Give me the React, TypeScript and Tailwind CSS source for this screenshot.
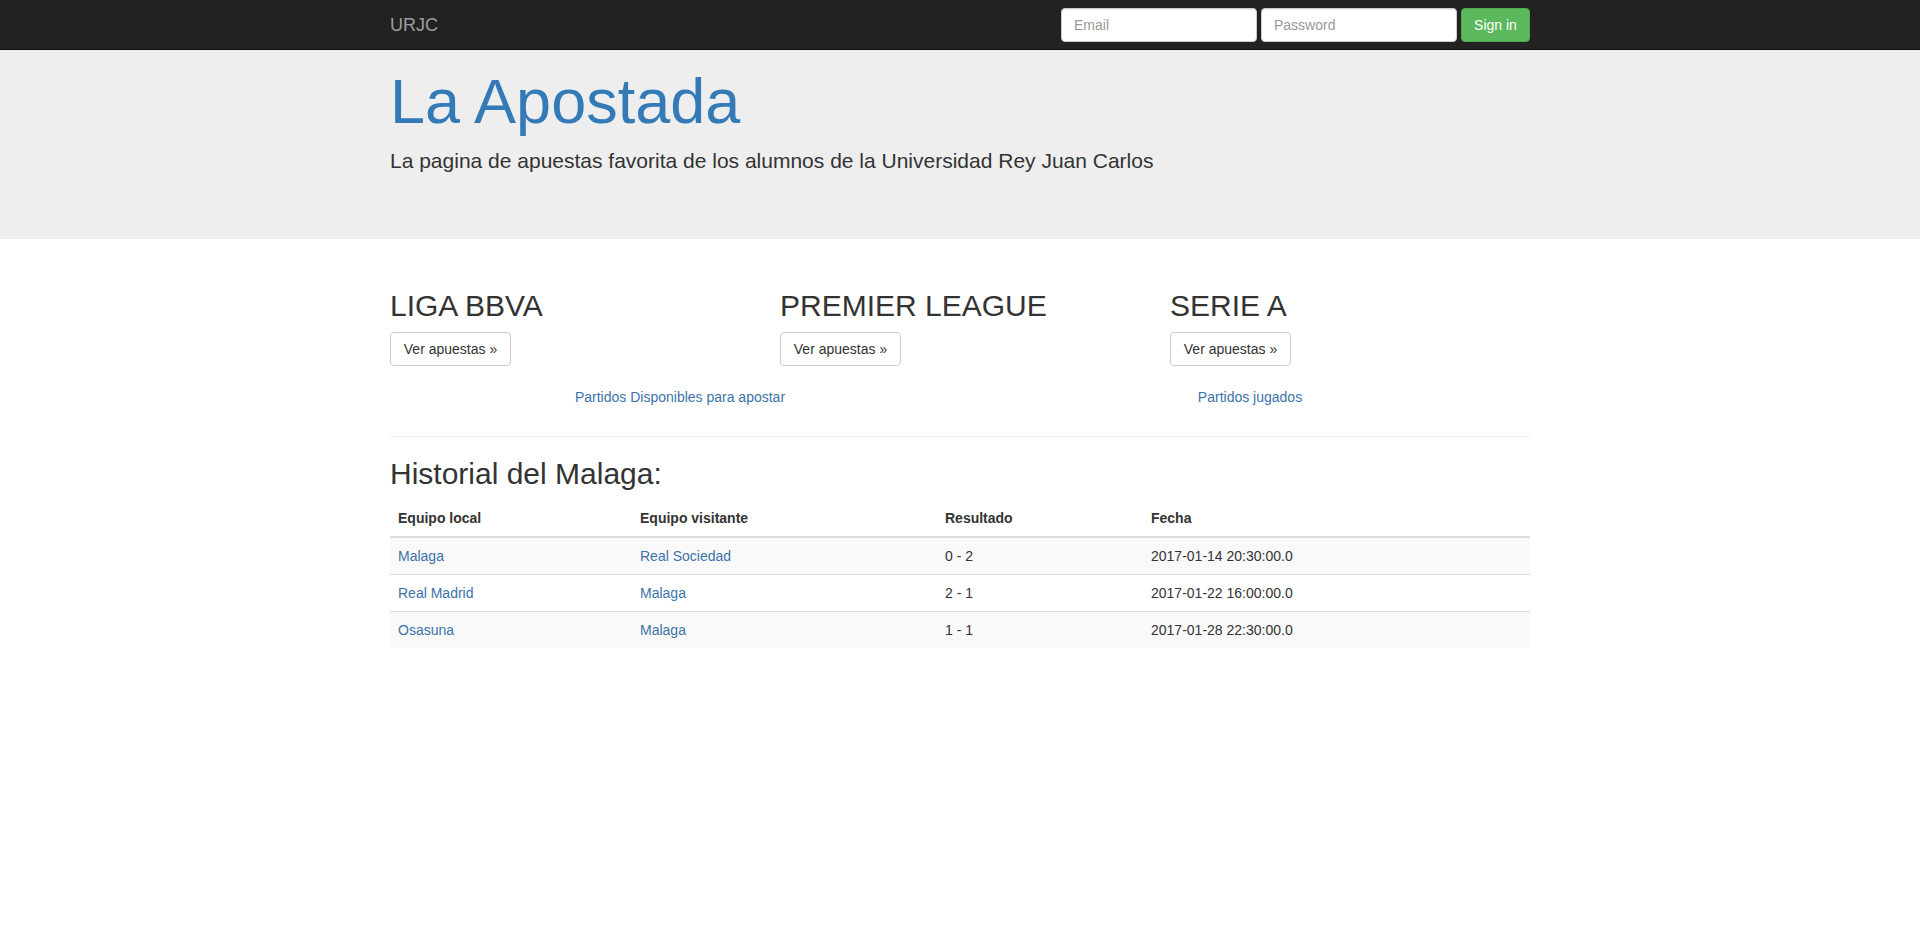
import React from "react";

const rows = [
  { local: "Malaga", visitante: "Real Sociedad", resultado: "0 - 2", fecha: "2017-01-14 20:30:00.0" },
  { local: "Real Madrid", visitante: "Malaga", resultado: "2 - 1", fecha: "2017-01-22 16:00:00.0" },
  { local: "Osasuna", visitante: "Malaga", resultado: "1 - 1", fecha: "2017-01-28 22:30:00.0" },
];

const leagues = ["LIGA BBVA", "PREMIER LEAGUE", "SERIE A"];

export default function App() {
  return (
    <div
      className="min-h-[949px] bg-white text-[14px] leading-[20px] text-[#333]"
      style={{ fontFamily: '"Liberation Sans", Arial, Helvetica, sans-serif' }}
    >
      {/* Navbar */}
      <nav className="h-[50px] border-b border-[#080808] bg-[#222]">
        <div className="mx-auto flex h-[49px] w-[1170px] items-center justify-between px-[15px]">
          <a className="text-[18px] leading-[20px] text-[#9d9d9d]" href="#">
            URJC
          </a>
          <form className="flex items-center gap-[4px]" onSubmit={(e) => e.preventDefault()}>
            <input
              type="text"
              placeholder="Email"
              className="h-[34px] w-[196px] rounded-[4px] border border-[#ccc] bg-white px-[12px] py-[6px] text-[14px] text-[#555] shadow-[inset_0_1px_1px_rgba(0,0,0,0.075)] outline-none placeholder:text-[#999]"
            />
            <input
              type="password"
              placeholder="Password"
              className="h-[34px] w-[196px] rounded-[4px] border border-[#ccc] bg-white px-[12px] py-[6px] text-[14px] text-[#555] shadow-[inset_0_1px_1px_rgba(0,0,0,0.075)] outline-none placeholder:text-[#999]"
            />
            <button
              type="submit"
              className="h-[34px] w-[69px] rounded-[4px] border border-[#4cae4c] bg-[#5cb85c] text-[14px] text-white"
            >
              Sign in
            </button>
          </form>
        </div>
      </nav>

      {/* Jumbotron */}
      <div className="mb-[30px] bg-[#eee] pb-[48px] pt-[17px]">
        <div className="mx-auto w-[1170px] px-[15px]">
          <h1 className="mb-[10px] text-[63px] leading-[1.1] font-medium text-[#337ab7]">La Apostada</h1>
          <p className="mb-[15px] text-[21px] leading-[30px] font-extralight text-[#333]">
            La pagina de apuestas favorita de los alumnos de la Universidad Rey Juan Carlos
          </p>
        </div>
      </div>

      <div className="mx-auto w-[1170px] px-[15px]">
        <div className="grid grid-cols-3 gap-[30px]">
          {leagues.map((l) => (
            <div key={l}>
              <h2 className="mb-[10px] mt-[20px] text-[30px] leading-[33px] font-medium text-[#333]">{l}</h2>
              <p className="mb-[10px]">
                <a
                  href="#"
                  className="inline-block h-[34px] w-[121px] rounded-[4px] border border-[#ccc] bg-white py-[6px] text-center text-[14px] leading-[20px] text-[#333]"
                >
                  Ver apuestas »
                </a>
              </p>
            </div>
          ))}
        </div>

        <div className="mt-[11px] grid grid-cols-2">
          <div className="pl-[10px] text-center">
            <a href="#" className="text-[#3d73ab]">
              Partidos Disponibles para apostar
            </a>
          </div>
          <div className="pl-[10px] text-center">
            <a href="#" className="text-[#3d73ab]">
              Partidos jugados
            </a>
          </div>
        </div>

        <hr className="mb-[20px] mt-[29px] border-t border-[#eee]" />

        <h2 className="mb-[10px] text-[30px] leading-[33px] font-medium text-[#333]">Historial del Malaga:</h2>

        <table className="w-full border-collapse">
          <colgroup>
            <col className="w-[242px]" />
            <col className="w-[305px]" />
            <col className="w-[206px]" />
            <col className="w-[387px]" />
          </colgroup>
          <thead>
            <tr>
              <th className="border-b-2 border-[#ddd] p-[8px] text-left font-bold">Equipo local</th>
              <th className="border-b-2 border-[#ddd] p-[8px] text-left font-bold">Equipo visitante</th>
              <th className="border-b-2 border-[#ddd] p-[8px] text-left font-bold">Resultado</th>
              <th className="border-b-2 border-[#ddd] p-[8px] text-left font-bold">Fecha</th>
            </tr>
          </thead>
          <tbody>
            {rows.map((r, i) => (
              <tr key={i} className={i % 2 === 0 ? "bg-[#f9f9f9]" : "bg-white"}>
                <td className="border-t border-[#ddd] p-[8px]">
                  <a href="#" className="text-[#3d73ab]">
                    {r.local}
                  </a>
                </td>
                <td className="border-t border-[#ddd] p-[8px]">
                  <a href="#" className="text-[#3d73ab]">
                    {r.visitante}
                  </a>
                </td>
                <td className="border-t border-[#ddd] p-[8px]">{r.resultado}</td>
                <td className="border-t border-[#ddd] p-[8px]">{r.fecha}</td>
              </tr>
            ))}
          </tbody>
        </table>
      </div>
    </div>
  );
}
